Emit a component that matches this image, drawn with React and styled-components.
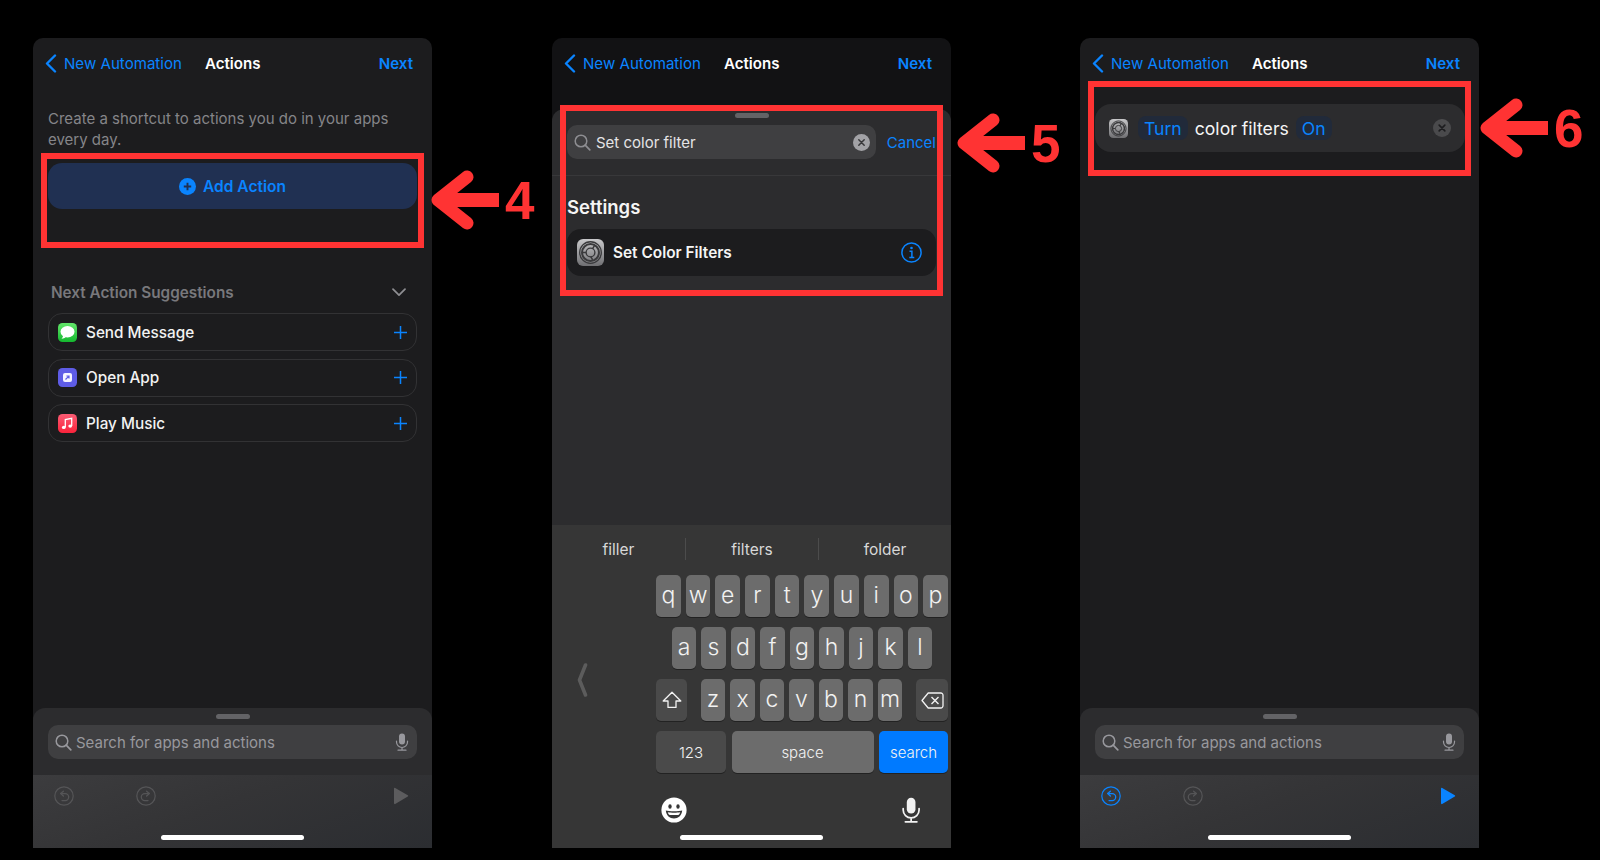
import React from "react"
import styled, { createGlobalStyle } from "styled-components"

const GlobalStyle = createGlobalStyle`
  html, body {
    margin: 0;
    background: #000;
    font-family: "Inter", "Liberation Sans", sans-serif;
    -webkit-font-smoothing: antialiased;
  }
`

const BLUE = "#0a84ff"
const RED = "#ff3333"

const Page = styled.div`
  display: flex;
  width: 1600px;
  height: 860px;
  padding: 38px 0 0;
  box-sizing: border-box;
  overflow: hidden;
  background: #000;
`

const Phone = styled.div`
  position: relative;
  display: flex;
  flex-direction: column;
  flex: none;
  width: 399px;
  height: 810px;
  margin-left: ${(p) => p.$offset}px;
  border-radius: 10px 10px 0 0;
  background: ${(p) => p.$bg || "#1c1c1e"};
`

const Nav = styled.div`
  display: flex;
  align-items: center;
  flex: none;
  height: 50px;
  padding: 0 19px 0 12px;
  font-size: 15.1px;
`

const NavBack = styled.div`
  display: flex;
  align-items: center;
  gap: 7px;
  width: 160px;
  color: ${BLUE};
  white-space: nowrap;
`

const NavTitle = styled.div`
  color: #fff;
  font-weight: 600;
`

const NavNext = styled.div`
  margin-left: auto;
  color: ${BLUE};
  font-weight: 600;
`

const Body = styled.div`
  flex: 1;
  min-height: 0;
  padding: 20px 15px 0;
`

const Prompt = styled.p`
  margin: 0 0 13px;
  color: #858589;
  font-size: 15px;
  line-height: 21px;
`

const AddButton = styled.div`
  display: flex;
  align-items: center;
  justify-content: center;
  gap: 7px;
  height: 46px;
  border-radius: 14px;
  background: #203052;
  color: ${BLUE};
  font-size: 15.5px;
  font-weight: 600;
`

const SectionHeader = styled.div`
  display: flex;
  align-items: center;
  justify-content: space-between;
  height: 20px;
  margin: 73px 11px 11px 3px;
  color: #78787c;
  font-size: 15.3px;
  font-weight: 600;
`

const SuggestionList = styled.div`
  display: flex;
  flex-direction: column;
  gap: 7.5px;
`

const SuggestionRow = styled.div`
  display: flex;
  align-items: center;
  gap: 9px;
  height: 38px;
  padding: 0 9px;
  box-sizing: border-box;
  border: 1px solid #323234;
  border-radius: 14px;
  color: #f2f2f2;
  font-size: 15.3px;
  font-weight: 500;
`

const RowPlus = styled.div`
  display: flex;
  margin-left: auto;
`

const Sheet = styled.div`
  flex: none;
  height: 140px;
  border-radius: 12px 12px 0 0;
  overflow: hidden;
  background: #2c2c2e;
`

const Handle = styled.div`
  width: 34px;
  height: 5px;
  margin: ${(p) => p.$top}px auto ${(p) => p.$bottom}px;
  border-radius: 3px;
  background: #636366;
`

const SearchField = styled.div`
  display: flex;
  align-items: center;
  gap: ${(p) => (p.$grow ? 5 : 4)}px;
  flex: ${(p) => (p.$grow ? 1 : "none")};
  height: 34px;
  margin: ${(p) => (p.$grow ? "0" : "0 15px")};
  padding: 0 ${(p) => (p.$grow ? 6 : 8)}px 0 7px;
  border-radius: 10px;
  background: #3f3f41;
  color: ${(p) => (p.$filled ? "#e4e4e6" : "#98989d")};
  font-size: 15px;
  white-space: nowrap;
`

const FieldEnd = styled.div`
  display: flex;
  margin-left: auto;
`

const Toolbar = styled.div`
  height: 73px;
  margin-top: 16px;
  padding-top: 11px;
  box-sizing: border-box;
  background: linear-gradient(160deg, #3c3c3e 0%, #343436 45%, #2b2d31 100%);
`

const ToolIcons = styled.div`
  display: flex;
  align-items: center;
  gap: 62px;
  height: 20px;
  padding: 0 23px 0 21px;
`

const PlayWrap = styled.div`
  display: flex;
  margin-left: auto;
`

const HomeBar = styled.div`
  width: 143px;
  height: 5px;
  margin: ${(p) => p.$top}px auto 0;
  border-radius: 3px;
  background: #fff;
`

const SearchSheet = styled.div`
  flex: 1;
  min-height: 0;
  margin-top: 21px;
  border-radius: 12px 12px 0 0;
  background: #2c2c2e;
`

const SearchRow = styled.div`
  display: flex;
  align-items: center;
  gap: 11px;
  padding: 0 15px;
`

const CancelLink = styled.div`
  color: ${BLUE};
  font-size: 15px;
`

const Divider = styled.div`
  height: 1px;
  margin-top: 16px;
  background: #38383a;
`

const GroupTitle = styled.h3`
  margin: 20px 15px 11px;
  color: #f5f5f5;
  font-size: 18.5px;
  font-weight: 600;
  line-height: 22px;
`

const ResultRow = styled.div`
  display: flex;
  align-items: center;
  gap: 9px;
  height: 47px;
  margin: 0 15px;
  padding: 0 14px 0 10px;
  border-radius: 14px;
  background: #1c1c1e;
  color: #f5f5f5;
  font-size: 15.4px;
  font-weight: 600;
`

const Keyboard = styled.div`
  flex: none;
  height: 323px;
  background: #363636;
`

const Suggestions = styled.div`
  display: grid;
  grid-template-columns: repeat(3, 1fr);
  align-items: center;
  height: 48px;
  margin-bottom: 2px;
  color: #d8d8d8;
  font-size: 15.5px;
`

const Suggestion = styled.div`
  display: flex;
  align-items: center;
  justify-content: center;
  height: 22px;
  border-left: ${(p) => (p.$divided ? "1px solid #4c4c4c" : "none")};
`

const KeyArea = styled.div`
  display: flex;
`

const SideColumn = styled.div`
  display: flex;
  align-items: center;
  flex: none;
  width: 104px;
  padding: 12px 0 0 25px;
  box-sizing: border-box;
`

const KeyRows = styled.div`
  display: flex;
  flex-direction: column;
  gap: 10px;
  width: 292px;
`

const KeyRow = styled.div`
  display: flex;
  justify-content: ${(p) => (p.$center ? "center" : "space-between")};
  gap: ${(p) => (p.$center ? "4.8px" : "0")};
`

const LetterGroup = styled.div`
  display: flex;
  gap: 4.8px;
`

const Key = styled.div`
  display: flex;
  align-items: center;
  justify-content: center;
  flex: none;
  width: ${(p) => p.$width || 24.7}px;
  height: 42px;
  border-radius: 5px;
  background: ${(p) => (p.$variant === "dark" ? "#4a4a4a" : p.$variant === "primary" ? "#007aff" : "#6c6c6c")};
  box-shadow: 0 1px 0 #222;
  color: #f2f2f2;
  font-size: ${(p) => p.$size || 23}px;
  font-weight: 300;
  padding-bottom: ${(p) => (p.$size ? 0 : 2)}px;
  box-sizing: border-box;
`

const KeyboardFooter = styled.div`
  display: flex;
  align-items: center;
  justify-content: space-between;
  height: 26px;
  margin-top: 24px;
  padding: 0 30px 0 109px;
`

const ActionRow = styled.div`
  display: flex;
  align-items: center;
  height: 48px;
  margin: 16px 14px 0 15px;
  padding: 0 14px;
  border-radius: 16px;
  background: #2c2c2e;
  color: #f5f5f5;
  font-size: 17.6px;
`

const Token = styled.span`
  display: flex;
  align-items: center;
  height: 24px;
  margin: ${(p) => p.$margin};
  padding: 0 6px;
  border-radius: 8px;
  background: #212a3a;
  color: ${BLUE};
`

const RedBox = styled.div`
  position: absolute;
  left: 8px;
  top: ${(p) => p.$top}px;
  width: 383px;
  height: ${(p) => p.$height}px;
  box-sizing: border-box;
  border: 6px solid ${RED};
  pointer-events: none;
`

const Callout = styled.div`
  position: absolute;
  left: ${(p) => p.$left}px;
  top: ${(p) => p.$top}px;
  display: flex;
  align-items: center;
  gap: 4px;
  height: 62px;
  color: ${RED};
  font-family: "Liberation Sans", sans-serif;
  font-size: 53px;
  font-weight: 700;
`

const Chevron = () => (
  <svg width="12" height="19" viewBox="0 0 12 19" fill="none">
    <path d="M10 1.5 2 9.5l8 8" stroke={BLUE} strokeWidth="2.4" strokeLinecap="round" strokeLinejoin="round" />
  </svg>
)

const Arrow = () => (
  <svg width="70" height="62" viewBox="0 0 70 62" fill="none">
    <path d="M36 8 7 31l29 23" stroke={RED} strokeWidth="13" strokeLinecap="round" strokeLinejoin="round" />
    <path d="M12 31h56" stroke={RED} strokeWidth="14" />
  </svg>
)

const SearchIcon = ({ color = "#98989d" }) => (
  <svg width="17" height="17" viewBox="0 0 17 17" fill="none">
    <circle cx="7" cy="7" r="5.8" stroke={color} strokeWidth="1.5" />
    <path d="m11.2 11.2 4.6 4.6" stroke={color} strokeWidth="1.7" strokeLinecap="round" />
  </svg>
)

const MicIcon = ({ color = "#98989d", size = 18 }) => (
  <svg width={size * 0.78} height={size} viewBox="0 0 14 18" fill="none">
    <rect x="4" y="0.5" width="6" height="11" rx="3" fill={color} />
    <path d="M1.5 8v1a5.5 5.5 0 0 0 11 0V8M7 14.5v2.5M3 17.2h8" stroke={color} strokeWidth="1.2" strokeLinecap="round" />
  </svg>
)

const ClearIcon = ({ bg, mark, size = 17 }) => (
  <svg width={size} height={size} viewBox="0 0 17 17">
    <circle cx="8.5" cy="8.5" r="8.5" fill={bg} />
    <path d="m5.8 5.8 5.4 5.4m0-5.4-5.4 5.4" stroke={mark} strokeWidth="1.5" strokeLinecap="round" />
  </svg>
)

const AddIcon = () => (
  <svg width="17" height="17" viewBox="0 0 17 17">
    <circle cx="8.5" cy="8.5" r="8.5" fill={BLUE} />
    <path d="M8.5 4.8v7.4M4.8 8.5h7.4" stroke="#203052" strokeWidth="1.9" />
  </svg>
)

const DownChevron = () => (
  <svg width="14" height="9" viewBox="0 0 14 9" fill="none">
    <path d="m1 1.2 6 6 6-6" stroke="#8e8e92" strokeWidth="1.7" strokeLinecap="round" strokeLinejoin="round" />
  </svg>
)

const PlusIcon = () => (
  <svg width="13" height="13" viewBox="0 0 13 13">
    <path d="M6.5 0v13M0 6.5h13" stroke={BLUE} strokeWidth="1.5" />
  </svg>
)

const MessagesIcon = () => (
  <svg width="19" height="19" viewBox="0 0 19 19">
    <defs>
      <linearGradient id="msgFill" x1="0" y1="0" x2="0" y2="1">
        <stop offset="0" stopColor="#63e66a" />
        <stop offset="1" stopColor="#14b82f" />
      </linearGradient>
    </defs>
    <rect width="19" height="19" rx="4.5" fill="url(#msgFill)" />
    <ellipse cx="9.5" cy="8.8" rx="7" ry="5.7" fill="#fff" />
    <path d="M5 12.5c0 1.4-.6 2.5-1.5 3.2 1.8 0 3.3-.6 4.3-1.6z" fill="#fff" />
  </svg>
)

const OpenAppIcon = () => (
  <svg width="19" height="19" viewBox="0 0 19 19">
    <rect width="19" height="19" rx="4.5" fill="#5e5ce6" />
    <rect x="5" y="5" width="9" height="9" rx="2" fill="#f4f3ff" />
    <path d="M7.5 11.5 10.6 8.4M8.4 8h2.6v2.6" fill="none" stroke="#5e5ce6" strokeWidth="1.2" />
  </svg>
)

const MusicIcon = () => (
  <svg width="19" height="19" viewBox="0 0 19 19">
    <defs>
      <linearGradient id="musicFill" x1="0" y1="0" x2="0" y2="1">
        <stop offset="0" stopColor="#fb5c74" />
        <stop offset="1" stopColor="#fa233b" />
      </linearGradient>
    </defs>
    <rect width="19" height="19" rx="4.5" fill="url(#musicFill)" />
    <path d="M7.3 13.2V5.6l6.4-1.3v7.6" fill="none" stroke="#fff" strokeWidth="1.3" />
    <ellipse cx="5.8" cy="13.400" rx="1.9" ry="1.6" fill="#fff" />
    <ellipse cx="12.2" cy="12.1" rx="1.9" ry="1.6" fill="#fff" />
  </svg>
)

const SettingsIcon = ({ size, id }) => (
  <svg width={size} height={size} viewBox="0 0 40 40" fill="none">
    <defs>
      <linearGradient id={id} x1="0" y1="0" x2="0" y2="1">
        <stop offset="0" stopColor="#c8c8ca" />
        <stop offset="1" stopColor="#6f6f72" />
      </linearGradient>
    </defs>
    <rect width="40" height="40" rx="9" fill={`url(#${id})`} />
    <circle cx="20" cy="20" r="16" stroke="#3a3a3c" strokeWidth="2" />
    <circle cx="20" cy="20" r="12.5" stroke="#3a3a3c" strokeWidth="3" />
    <circle cx="20" cy="20" r="6.5" stroke="#3a3a3c" strokeWidth="2" />
    <path d="M13.500 20H8m15.200-5.600 3-5.200m-3 21.600-3-5.200" stroke="#3a3a3c" strokeWidth="2.200" />
  </svg>
)

const InfoIcon = () => (
  <svg width="21" height="21" viewBox="0 0 21 21" fill="none">
    <circle cx="10.5" cy="10.5" r="9.6" stroke={BLUE} strokeWidth="1.5" />
    <circle cx="10.5" cy="6" r="1.3" fill={BLUE} />
    <path d="M8.5 9.2h2.400v6M8.300 15.400h5" stroke={BLUE} strokeWidth="1.5" />
  </svg>
)

const UndoIcon = ({ color }) => (
  <svg width="20" height="20" viewBox="0 0 20 20" fill="none">
    <circle cx="10" cy="10" r="9.2" stroke={color} strokeWidth="1.2" />
    <path d="M7.600 7.600h3.600a3.500 3.500 0 0 1 0 7H8" stroke={color} strokeWidth="1.3" strokeLinecap="round" />
    <path d="M9.400 5.200 6.600 7.600l2.800 2.400" stroke={color} strokeWidth="1.3" strokeLinecap="round" strokeLinejoin="round" />
  </svg>
)

const RedoIcon = ({ color }) => (
  <svg width="20" height="20" viewBox="0 0 20 20" fill="none">
    <circle cx="10" cy="10" r="9.2" stroke={color} strokeWidth="1.2" />
    <path d="M12.400 7.600H8.800a3.500 3.500 0 0 0 0 7H12" stroke={color} strokeWidth="1.3" strokeLinecap="round" />
    <path d="m10.600 5.200 2.800 2.400-2.800 2.400" stroke={color} strokeWidth="1.3" strokeLinecap="round" strokeLinejoin="round" />
  </svg>
)

const PlayIcon = ({ color }) => (
  <svg width="16" height="18" viewBox="0 0 16 18">
    <path d="M1 1.600c0-.7.600-1 1.200-.7l12.600 7.400c.5.300.5 1 0 1.300L2.200 17c-.6.400-1.200 0-1.200-.7z" fill={color} />
  </svg>
)

const KeyboardChevron = () => (
  <svg width="11" height="34" viewBox="0 0 11 34" fill="none">
    <path d="M8.500 2 2.500 17l6 15" stroke="#5c5c5c" strokeWidth="3.600" strokeLinecap="round" strokeLinejoin="round" />
  </svg>
)

const ShiftIcon = () => (
  <svg width="20" height="18" viewBox="0 0 20 18" fill="none">
    <path d="M10 1.200 1.200 10H6v6.400h8V10h4.800z" stroke="#f2f2f2" strokeWidth="1.3" strokeLinejoin="round" />
  </svg>
)

const BackspaceIcon = () => (
  <svg width="23" height="17" viewBox="0 0 23 17" fill="none">
    <path d="M7.200 1h12.600A2.200 2.200 0 0 1 22 3.200v10.600a2.200 2.200 0 0 1-2.200 2.200H7.200L1 8.500z" stroke="#f2f2f2" strokeWidth="1.3" strokeLinejoin="round" />
    <path d="m10.500 5 7 7m0-7-7 7" stroke="#f2f2f2" strokeWidth="1.4" />
  </svg>
)

const EmojiIcon = () => (
  <svg width="26" height="26" viewBox="0 0 26 26">
    <circle cx="13" cy="13" r="12.600" fill="#fff" />
    <ellipse cx="9" cy="9.500" rx="1.700" ry="2.300" fill="#363636" />
    <ellipse cx="17" cy="9.500" rx="1.700" ry="2.300" fill="#363636" />
    <path d="M4.800 13.600c3 1 13.400 1 16.400 0-.4 5-4 8-8.200 8s-7.800-3-8.200-8z" fill="#363636" />
    <path d="M6.800 15.200c3 .6 9.400.6 12.400 0-.3 1.300-.8 2-1.300 2.500-2.500.5-7.300.5-9.800 0-.5-.5-1-1.200-1.300-2.500z" fill="#fff" />
  </svg>
)

const NavBar = () => (
  <Nav>
    <NavBack>
      <Chevron />
      New Automation
    </NavBack>
    <NavTitle>Actions</NavTitle>
    <NavNext>Next</NavNext>
  </Nav>
)

const BottomSheet = ({ undoColor, playColor }) => (
  <Sheet>
    <Handle $top={6} $bottom={6} />
    <SearchField>
      <SearchIcon />
      Search for apps and actions
      <FieldEnd>
        <MicIcon />
      </FieldEnd>
    </SearchField>
    <Toolbar>
      <ToolIcons>
        <UndoIcon color={undoColor} />
        <RedoIcon color="#555557" />
        <PlayWrap>
          <PlayIcon color={playColor} />
        </PlayWrap>
      </ToolIcons>
      <HomeBar $top={29} />
    </Toolbar>
  </Sheet>
)

const Annotation = ({ left, top, label }) => (
  <Callout $left={left} $top={top}>
    <Arrow />
    {label}
  </Callout>
)

const suggestions = [
  { name: "Send Message", icon: <MessagesIcon /> },
  { name: "Open App", icon: <OpenAppIcon /> },
  { name: "Play Music", icon: <MusicIcon /> },
]

const Letters = ({ keys }) => keys.split("").map((k) => <Key key={k}>{k}</Key>)

const App = () => (
  <>
    <GlobalStyle />
    <Page>
      <Phone $offset={33}>
        <NavBar />
        <Body>
          <Prompt>
            Create a shortcut to actions you do in your apps
            <br />
            every day.
          </Prompt>
          <AddButton>
            <AddIcon />
            Add Action
          </AddButton>
          <SectionHeader>
            Next Action Suggestions
            <DownChevron />
          </SectionHeader>
          <SuggestionList>
            {suggestions.map((s) => (
              <SuggestionRow key={s.name}>
                {s.icon}
                {s.name}
                <RowPlus>
                  <PlusIcon />
                </RowPlus>
              </SuggestionRow>
            ))}
          </SuggestionList>
        </Body>
        <BottomSheet undoColor="#555557" playColor="#5c5c5e" />
        <RedBox $top={115} $height={95} />
        <Annotation left={398} top={131} label="4" />
      </Phone>

      <Phone $offset={120} $bg="#121214">
        <NavBar />
        <SearchSheet>
          <Handle $top={4} $bottom={7} />
          <SearchRow>
            <SearchField $grow $filled>
              <SearchIcon color="#8e8e92" />
              Set color filter
              <FieldEnd>
                <ClearIcon bg="#a2a2a6" mark="#38383a" />
              </FieldEnd>
            </SearchField>
            <CancelLink>Cancel</CancelLink>
          </SearchRow>
          <Divider />
          <GroupTitle>Settings</GroupTitle>
          <ResultRow>
            <SettingsIcon size={27} id="settingsLarge" />
            Set Color Filters
            <FieldEnd>
              <InfoIcon />
            </FieldEnd>
          </ResultRow>
        </SearchSheet>
        <Keyboard>
          <Suggestions>
            <Suggestion>filler</Suggestion>
            <Suggestion $divided>filters</Suggestion>
            <Suggestion $divided>folder</Suggestion>
          </Suggestions>
          <KeyArea>
            <SideColumn>
              <KeyboardChevron />
            </SideColumn>
            <KeyRows>
              <KeyRow>
                <Letters keys="qwertyuiop" />
              </KeyRow>
              <KeyRow $center>
                <Letters keys="asdfghjkl" />
              </KeyRow>
              <KeyRow>
                <Key $width={31} $variant="dark" $size={16}>
                  <ShiftIcon />
                </Key>
                <LetterGroup>
                  <Letters keys="zxcvbnm" />
                </LetterGroup>
                <Key $width={32} $variant="dark" $size={16}>
                  <BackspaceIcon />
                </Key>
              </KeyRow>
              <KeyRow>
                <Key $width={70} $variant="dark" $size={15}>123</Key>
                <Key $width={142} $size={15}>space</Key>
                <Key $width={69} $variant="primary" $size={15}>search</Key>
              </KeyRow>
            </KeyRows>
          </KeyArea>
          <KeyboardFooter>
            <EmojiIcon />
            <MicIcon color="#f2f2f2" size={26} />
          </KeyboardFooter>
          <HomeBar $top={12} />
        </Keyboard>
        <RedBox $top={67} $height={191} />
        <Annotation left={405} top={74} label="5" />
      </Phone>

      <Phone $offset={129}>
        <NavBar />
        <ActionRow>
          <SettingsIcon size={19} id="settingsSmall" />
          <Token $margin="0 7px 0 10px">Turn</Token>
          color filters
          <Token $margin="0 0 0 7px">On</Token>
          <FieldEnd>
            <ClearIcon bg="#4a4a4c" mark="#1c1c1e" size={18} />
          </FieldEnd>
        </ActionRow>
        <Body />
        <BottomSheet undoColor={BLUE} playColor={BLUE} />
        <RedBox $top={43} $height={95} />
        <Annotation left={400} top={59} label="6" />
      </Phone>
    </Page>
  </>
)

export default App
